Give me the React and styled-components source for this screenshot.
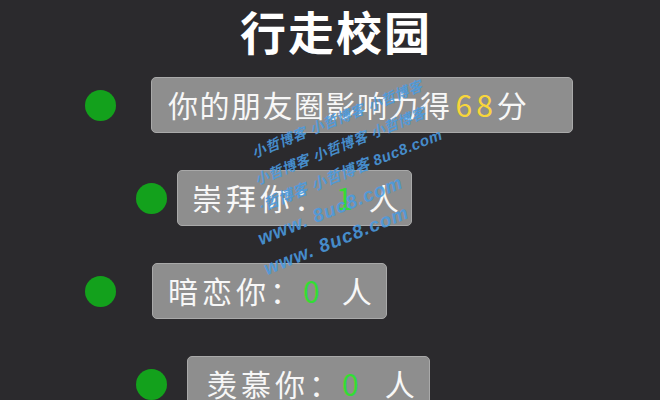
import React from "react";
import styled, { createGlobalStyle } from "styled-components";

const Global = createGlobalStyle`
  html, body { margin: 0; padding: 0; background: #2b2a2d; }
  body { font-family: "Noto Sans CJK SC", "Noto Sans", sans-serif; }
`;

const Page = styled.div`
  position: relative;
  width: 660px;
  height: 400px;
  overflow: hidden;
  background: #2b2a2d;
  display: flex;
  flex-direction: column;
`;

const Title = styled.h1`
  margin: 0 0 17px 12px;
  height: 60px;
  font-size: 46px;
  line-height: 60px;
  font-weight: 700;
  letter-spacing: 2px;
  color: #ffffff;
  text-align: center;
`;

const List = styled.div`
  display: flex;
  flex-direction: column;
  gap: 37px;
`;

const Row = styled.div`
  display: flex;
  align-items: center;
  padding-left: ${(p) => p.$indent}px;
  gap: ${(p) => p.$gap}px;
`;

const Dot = styled.span`
  flex: none;
  width: 31px;
  height: 31px;
  border-radius: 50%;
  background: #13a11c;
`;

const Box = styled.div`
  box-sizing: border-box;
  flex: none;
  width: ${(p) => p.$width}px;
  height: 56px;
  padding-left: ${(p) => p.$pad}px;
  padding-bottom: 2px;
  display: flex;
  align-items: center;
  background: #8e8e8e;
  border: 1px solid #a9a9a9;
  border-radius: 5px;
  color: #f7f7f7;
  font-size: 30px;
  line-height: 36px;
  white-space: nowrap;
`;

const Label = styled.span`
  letter-spacing: ${(p) => p.$spacing}px;
`;

const Num = styled.span`
  color: ${(p) => p.$color};
  letter-spacing: ${(p) => p.$spacing}px;
  margin-left: ${(p) => p.$ml}px;
  margin-right: ${(p) => p.$mr}px;
`;

const Watermark = styled.div`
  position: absolute;
  left: 0;
  top: 0;
  width: 660px;
  height: 400px;
  pointer-events: none;
`;

const Mark = styled.span`
  position: absolute;
  white-space: nowrap;
  line-height: 1;
  transform-origin: 0 100%;
  transform: rotate(-22deg);
  font-family: "Liberation Sans", "Noto Sans CJK SC", sans-serif;
  font-weight: 700;
  font-style: italic;
  font-size: ${(p) => p.$size}px;
  letter-spacing: ${(p) => p.$ls}px;
  color: rgba(74, 155, 224, 0.88);
`;

const marks = [
  { x: 255, y: 160, t: "小哲博客 小哲博客 小哲博客", s: 14, ls: 0.5 },
  { x: 258, y: 187, t: "小哲博客 小哲博客 小哲博客", s: 14, ls: 0.5 },
  { x: 262, y: 214, t: "·哲博客 小哲博客 8uc8.com", s: 15, ls: 0.5 },
  { x: 262, y: 248, t: "www. 8uc8.com", s: 19, ls: 1 },
  { x: 268, y: 278, t: "www. 8uc8.com", s: 19, ls: 1 },
];

export default function App() {
  return (
    <Page>
      <Global />
      <Title>行走校园</Title>
      <List>
        <Row $indent={85} $gap={35}>
          <Dot />
          <Box $width={422} $pad={16}>
            <Label $spacing={1.5}>你的朋友圈影响力得</Label>
            <Num $color="#f8d63a" $spacing={4} $ml={4} $mr={0}>68</Num>
            <Label $spacing={0}>分</Label>
          </Box>
        </Row>
        <Row $indent={136} $gap={10}>
          <Dot />
          <Box $width={235} $pad={14}>
            <Label $spacing={4}>崇拜你：</Label>
            <Num $color="#33dd33" $spacing={4} $ml={8} $mr={12}>1</Num>
            <Label $spacing={0}>人</Label>
          </Box>
        </Row>
        <Row $indent={85} $gap={36}>
          <Dot />
          <Box $width={235} $pad={15}>
            <Label $spacing={4}>暗恋你：</Label>
            <Num $color="#33dd33" $spacing={4} $ml={-1} $mr={18}>0</Num>
            <Label $spacing={0}>人</Label>
          </Box>
        </Row>
        <Row $indent={136} $gap={20}>
          <Dot />
          <Box $width={243} $pad={19}>
            <Label $spacing={4}>羡慕你：</Label>
            <Num $color="#33dd33" $spacing={4} $ml={-1} $mr={22}>0</Num>
            <Label $spacing={0}>人</Label>
          </Box>
        </Row>
      </List>
      <Watermark>
        {marks.map((m, i) => (
          <Mark key={i} $size={m.s} $ls={m.ls} style={{ left: m.x, top: m.y - m.s }}>
            {m.t}
          </Mark>
        ))}
      </Watermark>
    </Page>
  );
}
